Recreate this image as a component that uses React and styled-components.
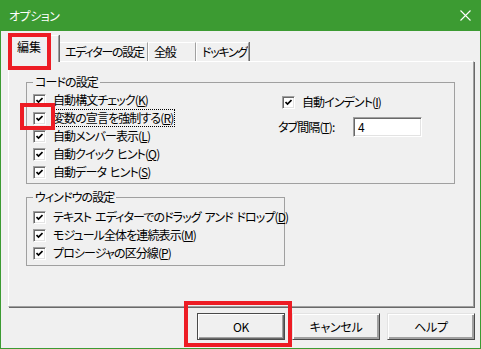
import React from 'react'
import styled, { createGlobalStyle } from 'styled-components'

const GlobalStyle = createGlobalStyle`
    * { box-sizing: border-box; }
    body {
        margin: 0;
        background: #f0f0f0;
        font-family: "Noto Sans CJK JP", "Noto Sans", sans-serif;
        font-size: 12px;
        letter-spacing: -0.9px;
        word-spacing: 2px;
        font-feature-settings: "palt";
        color: #000;
    }
`

const Window = styled.div`
    position: relative;
    width: 481px;
    height: 349px;
    border: 1px solid #3c9b32;
    border-top: none;
    background: #f0f0f0;
    display: flex;
    flex-direction: column;
`

const TitleBar = styled.div`
    height: 31px;
    margin: 0 -1px;
    background: #3c9b32;
    color: #fff;
    display: flex;
    align-items: center;
    justify-content: space-between;
    padding: 0 10px 0 9px;
    line-height: 14px;
    letter-spacing: -0.5px;
`

const TabStrip = styled.div`
    height: 30px;
    padding-left: 7px;
    display: flex;
    align-items: flex-end;
`

const Tab = styled.div`
    position: relative;
    width: ${props => props.w}px;
    height: ${props => props.active ? 27 : 19}px;
    margin-bottom: ${props => props.active ? -1 : 0}px;
    z-index: ${props => props.active ? 1 : 0};
    padding-left: ${props => props.active ? 8 : 5}px;
    padding-top: ${props => props.active ? 4 : 2}px;
    line-height: 14px;
    letter-spacing: ${props => props.active ? 0 : -1.3}px;
    white-space: nowrap;
    overflow: hidden;
    background: #f0f0f0;
    border-top: 1px solid #fff;
    border-left: 1px solid #fff;
    border-right: 1px solid #a0a0a0;
    box-shadow: 1px 0 0 #696969;
`

const Panel = styled.div`
    margin: 0 6px 0 7px;
    height: 246px;
    border-top: 1px solid #fff;
    border-left: 1px solid #fff;
    border-right: 1px solid #a0a0a0;
    border-bottom: 1px solid #a0a0a0;
    box-shadow: 1px 1px 0 #696969;
    padding: 20px 0 0 17px;
    display: flex;
    flex-direction: column;
`

const Group = styled.div`
    position: relative;
    width: ${props => props.w}px;
    height: ${props => props.h}px;
    margin-bottom: 13px;
    border: 1px solid #a0a0a0;
    padding: ${props => props.pt}px 0 0 6px;
    display: flex;
`

const Legend = styled.span`
    position: absolute;
    top: -8px;
    left: 6px;
    padding: 0 2px;
    line-height: 14px;
    background: #f0f0f0;
`

const Column = styled.div`
    width: ${props => props.w ? `${props.w}px` : 'auto'};
    padding-top: ${props => props.pt || 0}px;
    display: flex;
    flex-direction: column;
`

const Row = styled.div`
    height: ${props => props.h || 18}px;
    margin-top: ${props => props.mt || 0}px;
    padding-left: ${props => props.pl || 0}px;
    display: flex;
    align-items: center;
    white-space: nowrap;
`

const Box = styled.span`
    width: 13px;
    height: 13px;
    flex: none;
    background: #fff;
    border-top: 1px solid #a0a0a0;
    border-left: 1px solid #a0a0a0;
    border-right: 1px solid #fff;
    border-bottom: 1px solid #fff;
    box-shadow: inset 1px 1px 0 #696969, inset -1px -1px 0 #e3e3e3;
    display: flex;
    align-items: center;
    justify-content: center;
`

const Label = styled.span`
    margin-left: 6px;
    padding: 1px 1px;
    line-height: 14px;
    outline: ${props => props.focus ? '1px dotted #000' : 'none'};
    outline-offset: 0;
`

const FieldLabel = styled.span`
    width: 75px;
    line-height: 14px;
`

const TextBox = styled.div`
    width: 69px;
    height: 20px;
    background: #fff;
    border-top: 1px solid #a0a0a0;
    border-left: 1px solid #a0a0a0;
    border-right: 1px solid #fff;
    border-bottom: 1px solid #fff;
    box-shadow: inset 1px 1px 0 #696969, inset -1px -1px 0 #e3e3e3;
    padding: 2px 0 0 4px;
    line-height: 14px;
`

const Footer = styled.div`
    flex: 1;
    display: flex;
    justify-content: flex-end;
    align-items: flex-start;
    padding: 6px 5px 0 0;
    gap: 7px;
`

const Button = styled.div`
    width: 88px;
    height: 27px;
    background: #f0f0f0;
    border: 1px solid ${props => props.primary ? '#4a4a4a' : '#e3e3e3'};
    border-right-color: #4a4a4a;
    border-bottom-color: #4a4a4a;
    box-shadow: inset 1px 1px 0 #fff, inset -1px -1px 0 ${props => props.primary ? '#696969' : '#a0a0a0'}, inset -2px -2px 0 #a0a0a0;
    display: flex;
    align-items: center;
    justify-content: center;
    line-height: 14px;
    letter-spacing: -0.3px;
`

const Mark = styled.div`
    position: absolute;
    left: ${props => props.x}px;
    top: ${props => props.y}px;
    width: ${props => props.w}px;
    height: ${props => props.h}px;
    border: 4px solid #ed1c24;
    z-index: 5;
`

const Check = () => (
    <svg width="7" height="7" viewBox="0 0 7 7">
        <path d="M0.5 3 L2.5 5 L6.5 1" stroke="#000" strokeWidth="1.7" fill="none" />
    </svg>
)

const CloseIcon = () => (
    <svg width="11" height="11" viewBox="0 0 11 11">
        <path d="M0.5 0.5 L10.5 10.5 M10.5 0.5 L0.5 10.5" stroke="#fff" strokeWidth="1.1" />
    </svg>
)

const CheckRow = ({ children, focus, pl }) => (
    <Row pl={pl}>
        <Box><Check /></Box>
        <Label focus={focus}>{children}</Label>
    </Row>
)

const App = () => (
    <>
        <GlobalStyle />
        <Window>
            <TitleBar>
                <span>オプション</span>
                <CloseIcon />
            </TitleBar>
            <TabStrip>
                <Tab active w={51}>編集</Tab>
                <Tab w={89}>エディターの設定</Tab>
                <Tab w={48}>全般</Tab>
                <Tab w={53}>ドッキング</Tab>
            </TabStrip>
            <Panel>
                <Group w={429} h={102} pt={8}>
                    <Legend>コードの設定</Legend>
                    <Column w={245}>
                        <CheckRow>自動構文チェック(<u>K</u>)</CheckRow>
                        <CheckRow focus>変数の宣言を強制する(<u>R</u>)</CheckRow>
                        <CheckRow>自動メンバー表示(<u>L</u>)</CheckRow>
                        <CheckRow>自動クイック ヒント(<u>Q</u>)</CheckRow>
                        <CheckRow>自動データ ヒント(<u>S</u>)</CheckRow>
                    </Column>
                    <Column pt={2}>
                        <CheckRow pl={4}>自動インデント(<u>I</u>)</CheckRow>
                        <Row h={20} mt={6}>
                            <FieldLabel>タブ間隔(<u>T</u>):</FieldLabel>
                            <TextBox>4</TextBox>
                        </Row>
                    </Column>
                </Group>
                <Group w={259} h={69} pt={10}>
                    <Legend>ウィンドウの設定</Legend>
                    <Column>
                        <CheckRow>テキスト エディターでのドラッグ アンド ドロップ(<u>D</u>)</CheckRow>
                        <CheckRow>モジュール全体を連続表示(<u>M</u>)</CheckRow>
                        <CheckRow>プロシージャの区分線(<u>P</u>)</CheckRow>
                    </Column>
                </Group>
            </Panel>
            <Footer>
                <Button primary>OK</Button>
                <Button>キャンセル</Button>
                <Button>ヘルプ</Button>
            </Footer>
            <Mark x={7} y={33} w={43} h={37} />
            <Mark x={19} y={103} w={35} h={27} />
            <Mark x={183} y={301} w={108} h={46} />
        </Window>
    </>
)

export default App
